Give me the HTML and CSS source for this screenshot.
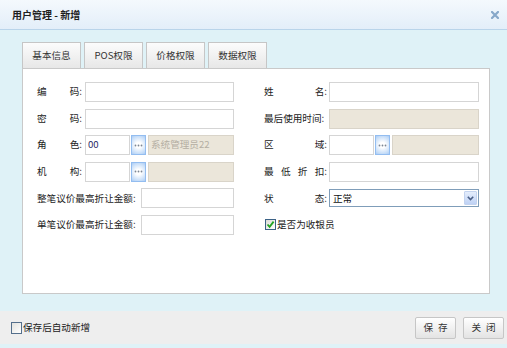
FILE: index.html
```html
<!DOCTYPE html>
<html lang="zh-CN">
<head>
<meta charset="utf-8">
<title>用户管理 - 新增</title>
<link rel="stylesheet" href="styles.css">
</head>
<body>
<div class="dialog">
  <div class="titlebar">
    <span class="title">用户管理 - 新增</span>
    <svg class="close" width="8" height="8" viewBox="0 0 8 8"><path d="M1 1 L7 7 M7 1 L1 7" stroke="#87a8c9" stroke-width="2.2" stroke-linecap="square"/></svg>
  </div>
  <div class="main">
    <div class="tabs">
      <div class="tab">基本信息</div>
      <div class="tab">POS权限</div>
      <div class="tab">价格权限</div>
      <div class="tab">数据权限</div>
    </div>
    <div class="panel">
      <div class="form">
        <div class="field"><span class="lbl s"><span>编</span><span>码:</span></span><div class="inp"></div></div>
        <div class="field"><span class="lbl r"><span>姓</span><span>名:</span></span><div class="inp"></div></div>

        <div class="field"><span class="lbl s"><span>密</span><span>码:</span></span><div class="inp"></div></div>
        <div class="field"><span class="lbl r"><span>最后使用时间:</span></span><div class="inp dis"></div></div>

        <div class="field"><span class="lbl s"><span>角</span><span>色:</span></span><div class="inp code">00</div><div class="more"><svg width="9" height="3" viewBox="0 0 9 3"><circle cx="1.5" cy="1.5" r="0.9" fill="#7d8794"/><circle cx="4.5" cy="1.5" r="0.9" fill="#7d8794"/><circle cx="7.5" cy="1.5" r="0.9" fill="#7d8794"/></svg></div><div class="inp dis">系统管理员22</div></div>
        <div class="field"><span class="lbl r"><span>区</span><span>域:</span></span><div class="inp code"></div><div class="more"><svg width="9" height="3" viewBox="0 0 9 3"><circle cx="1.5" cy="1.5" r="0.9" fill="#7d8794"/><circle cx="4.5" cy="1.5" r="0.9" fill="#7d8794"/><circle cx="7.5" cy="1.5" r="0.9" fill="#7d8794"/></svg></div><div class="inp dis"></div></div>

        <div class="field"><span class="lbl s"><span>机</span><span>构:</span></span><div class="inp code"></div><div class="more"><svg width="9" height="3" viewBox="0 0 9 3"><circle cx="1.5" cy="1.5" r="0.9" fill="#7d8794"/><circle cx="4.5" cy="1.5" r="0.9" fill="#7d8794"/><circle cx="7.5" cy="1.5" r="0.9" fill="#7d8794"/></svg></div><div class="inp dis"></div></div>
        <div class="field"><span class="lbl r"><span>最</span><span>低</span><span>折</span><span>扣:</span></span><div class="inp"></div></div>

        <div class="field"><span class="lbl long"><span>整笔议价最高折让金额:</span></span><div class="inp"></div></div>
        <div class="field"><span class="lbl r"><span>状</span><span>态:</span></span>
          <div class="select"><span class="sel-text">正常</span><span class="arrow"><svg width="7" height="5" viewBox="0 0 7 5"><path d="M0.8 0.8 L3.5 3.6 L6.2 0.8" fill="none" stroke="#4a5f86" stroke-width="1.6"/></svg></span></div>
        </div>

        <div class="field"><span class="lbl long"><span>单笔议价最高折让金额:</span></span><div class="inp"></div></div>
        <div class="field check-field"><span class="cb checked"><svg width="9" height="9" viewBox="0 0 9 9"><path d="M1.5 4.5 L3.6 6.8 L7.6 1.6" fill="none" stroke="#22a322" stroke-width="1.8"/></svg></span><span>是否为收银员</span></div>
      </div>
    </div>
  </div>
  <div class="footer">
    <div class="auto"><span class="cb"></span><span>保存后自动新增</span></div>
    <div class="buttons">
      <div class="button"><span>保</span><span>存</span></div>
      <div class="button"><span>关</span><span>闭</span></div>
    </div>
  </div>
</div>
</body>
</html>
```
FILE: styles.css
```css
html, body {
  margin: 0;
  padding: 0;
}
body {
  font-family: "Noto Sans CJK SC", "Liberation Sans", sans-serif;
  font-size: 9.6px;
  line-height: 1.2;
  color: #222;
  background: #dff2f7;
}
.dialog {
  width: 507px;
  height: 348px;
  background: #dff2f7;
  display: flex;
  flex-direction: column;
}
.titlebar {
  height: 30px;
  flex: none;
  box-sizing: border-box;
  border-bottom: 1px solid #b9d4ea;
  background: linear-gradient(#f4f9fd, #e3eef9);
  display: flex;
  align-items: center;
  justify-content: space-between;
  padding: 0 8px 0 12px;
}
.title {
  font-weight: bold;
  font-size: 10px;
  color: #1e1e1e;
}
.close {
  display: block;
}
.main {
  height: 281px;
  flex: none;
  box-sizing: border-box;
  padding: 12px 17px 17px 22px;
  display: flex;
  flex-direction: column;
}
.tabs {
  display: flex;
  gap: 3px;
  height: 26px;
}
.tab {
  width: 59px;
  box-sizing: border-box;
  border: 1px solid #c6c6c6;
  border-bottom: none;
  background: linear-gradient(#fcfcfc, #e7e7e7);
  display: flex;
  align-items: center;
  justify-content: center;
  color: #333;
}
.panel {
  height: 226px;
  box-sizing: border-box;
  border: 1px solid #c9c9c9;
  background: #fff;
  padding: 13px 0 0 14px;
}
.form {
  display: grid;
  grid-template-columns: 197px 215px;
  column-gap: 30px;
  grid-auto-rows: 20px;
  row-gap: 6.6px;
}
.field {
  display: flex;
  align-items: center;
}
.lbl {
  display: flex;
  justify-content: space-between;
  flex: none;
  white-space: nowrap;
  color: #222;
}
.lbl.s {
  width: 45px;
  margin-right: 3px;
}
.lbl.r {
  width: 63px;
  margin-right: 2px;
}
.lbl.long {
  width: 101px;
  margin-right: 3px;
}
.inp {
  flex: 1;
  height: 20px;
  box-sizing: border-box;
  border: 1px solid #d5d5d5;
  background: #fff;
  display: flex;
  align-items: center;
  padding-left: 2px;
  color: #2a2a66;
  white-space: nowrap;
  overflow: hidden;
}
.inp.code {
  flex: none;
  width: 45px;
}
.inp.dis {
  background: #ebe6da;
  border-color: #d9d4c9;
  color: #b4aea3;
}
.more {
  flex: none;
  width: 15px;
  height: 20px;
  box-sizing: border-box;
  margin: 0 2px 0 1px;
  border: 1px solid #93bdf0;
  background: radial-gradient(circle at 50% 50%, #ffffff 25%, #c4dcf8 80%, #a9cbf4 100%);
  display: flex;
  align-items: center;
  justify-content: center;
}
.more svg {
  display: block;
}
.select {
  flex: 1;
  height: 18px;
  box-sizing: border-box;
  border: 1px solid #7f9db9;
  background: #fff;
  display: flex;
  align-items: center;
  justify-content: space-between;
  padding: 1px 1px 1px 3px;
}
.sel-text {
  color: #111;
}
.arrow {
  width: 13px;
  height: 14px;
  box-sizing: border-box;
  border: 1px solid #c3d3ef;
  background: linear-gradient(#e4edfc, #bfd2f5);
  display: flex;
  align-items: center;
  justify-content: center;
  border-radius: 1px;
}
.check-field {
  gap: 1px;
  padding-left: 1px;
}
.cb {
  flex: none;
  width: 11px;
  height: 11px;
  box-sizing: border-box;
  border: 1px solid #3c6286;
  background: linear-gradient(135deg, #dcdcd6, #ffffff);
  display: flex;
  align-items: center;
  justify-content: center;
}
.cb svg {
  display: block;
}
.footer {
  height: 33px;
  flex: none;
  background: #eeeeee;
  display: flex;
  align-items: center;
  justify-content: space-between;
  padding: 0 3px 0 11px;
}
.auto {
  display: flex;
  align-items: center;
  gap: 1px;
}
.auto .cb {
  width: 11px;
  height: 12px;
  border-color: #546f8c;
  background: linear-gradient(135deg, #e2e2de, #ffffff);
}
.buttons {
  display: flex;
  gap: 7px;
}
.button {
  width: 41px;
  height: 22px;
  box-sizing: border-box;
  border: 1px solid #c6c6c6;
  border-radius: 2px;
  background: linear-gradient(#ffffff, #e3e3e3);
  display: flex;
  align-items: center;
  justify-content: center;
  gap: 5px;
  color: #333;
}
```
